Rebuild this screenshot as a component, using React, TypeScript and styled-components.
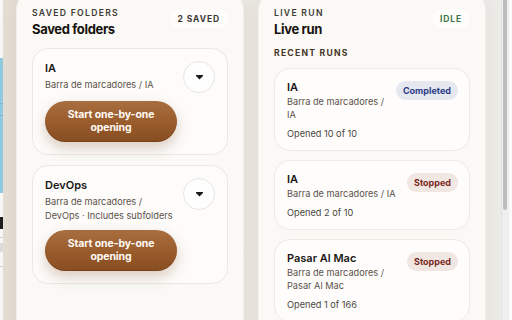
import styled, { createGlobalStyle } from 'styled-components';

const GlobalStyle = createGlobalStyle`
  html, body {
    margin: 0;
    padding: 0;
    background: #fafafa;
    font-family: Inter, "Noto Sans", sans-serif;
    overflow: hidden;
  }
  * { box-sizing: border-box; }
`;

type Folder = { name: string; path: string };
type Run = { name: string; path: string; opened: string; status: 'completed' | 'stopped' };

const folders: Folder[] = [
  { name: 'IA', path: 'Barra de marcadores / IA' },
  { name: 'DevOps', path: 'Barra de marcadores / DevOps · Includes subfolders' },
];

const runs: Run[] = [
  { name: 'IA', path: 'Barra de marcadores / IA', opened: 'Opened 10 of 10', status: 'completed' },
  { name: 'IA', path: 'Barra de marcadores / IA', opened: 'Opened 2 of 10', status: 'stopped' },
  { name: 'Pasar Al Mac', path: 'Barra de marcadores / Pasar Al Mac', opened: 'Opened 1 of 166', status: 'stopped' },
];

const App = () => {
  return (
    <>
      <GlobalStyle />
      <Screen>
        <PageEdge>
          <EdgeBlock $h={58} $bg="#f7f7f7" />
          <EdgeBlue>
            <EdgeLine />
            <EdgeLine />
          </EdgeBlue>
          <EdgeBlock $h={24} $bg="#f7f7f7" />
          <EdgeBlock $h={12} $bg="#1e1e1e" />
          <EdgeBlock $h={8} $bg="#f7f7f7" />
          <EdgeBlock $h={1} $bg="#cfcfcf" />
          <EdgeBlock $h={5} $bg="#f7f7f7" />
          <EdgeBlock $h={9} $bg="#dcdcdc" />
          <EdgeBlock $h={14} $bg="#f7f7f7" />
          <EdgeBlock $h={1} $bg="#cfcfcf" />
        </PageEdge>

        <Panel>
          <Column>
            <Header>
              <HeaderText>
                <Eyebrow>Saved folders</Eyebrow>
                <Title>Saved folders</Title>
              </HeaderText>
              <Pill>2 saved</Pill>
            </Header>
            <FolderList>
              {folders.map((f) => (
                <FolderCard key={f.name}>
                  <FolderTop>
                    <FolderText>
                      <ItemName>{f.name}</ItemName>
                      <FolderPath>{f.path}</FolderPath>
                    </FolderText>
                    <MenuButton aria-label="More">
                      <svg width="7" height="5" viewBox="0 0 7 5">
                        <rect x="0" y="0" width="7" height="1" fill="#1d1a17" />
                        <polygon points="0,1 7,1 3.5,4.6" fill="#1d1a17" />
                      </svg>
                    </MenuButton>
                  </FolderTop>
                  <StartButton>Start one-by-one opening</StartButton>
                </FolderCard>
              ))}
            </FolderList>
          </Column>

          <Column>
            <Header>
              <HeaderText>
                <Eyebrow>Live run</Eyebrow>
                <Title>Live run</Title>
              </HeaderText>
              <Pill $tone="green">Idle</Pill>
            </Header>
            <SectionLabel>Recent runs</SectionLabel>
            <RunList>
              {runs.map((r, i) => (
                <RunCard key={i}>
                  <RunText>
                    <ItemName>{r.name}</ItemName>
                    <RunPath>{r.path}</RunPath>
                    <RunMeta>{r.opened}</RunMeta>
                  </RunText>
                  <Status $status={r.status}>
                    {r.status === 'completed' ? 'Completed' : 'Stopped'}
                  </Status>
                </RunCard>
              ))}
            </RunList>
          </Column>
        </Panel>

        <ScrollTrack>
          <ScrollThumb />
        </ScrollTrack>
        <PageRest />
      </Screen>
    </>
  );
};

export default App;

const Screen = styled.div`
  display: flex;
  width: 512px;
  height: 320px;
  overflow: hidden;
`;

const PageEdge = styled.div`
  width: 3px;
  flex: none;
  display: flex;
  flex-direction: column;
  background: #f7f7f7;
`;

const EdgeBlock = styled.div<{ $h: number; $bg: string }>`
  height: ${(p) => p.$h}px;
  background: ${(p) => p.$bg};
  flex: none;
`;

const EdgeBlue = styled.div`
  height: 135px;
  flex: none;
  background: #93c9df;
  display: flex;
  flex-direction: column;
  gap: 11px;
  padding-top: 45px;
`;

const EdgeLine = styled.div`
  height: 1px;
  background: #7fb3ca;
`;

const Panel = styled.div`
  width: 498px;
  flex: none;
  display: grid;
  grid-template-columns: 228px 228px;
  column-gap: 14px;
  align-items: start;
  padding: 0 15px 0 13px;
  background: linear-gradient(90deg, #e4ddd3 0%, #eae6e0 45%, #ecebe7 100%);
`;

const Column = styled.section`
  margin-top: -10px;
  min-height: 360px;
  padding: 16px 15px 16px 15px;
  background: #faf9f6;
  border-radius: 20px;
  border: 1px solid rgba(120, 100, 80, 0.06);
  box-shadow: 0 4px 16px rgba(90, 70, 50, 0.07);
`;

const Header = styled.div`
  display: flex;
  justify-content: space-between;
  align-items: flex-start;
`;

const HeaderText = styled.div`
  display: flex;
  flex-direction: column;
`;

const Eyebrow = styled.div`
  font-size: 8.6px;
  line-height: 13px;
  font-weight: 600;
  letter-spacing: 1.3px;
  text-transform: uppercase;
  color: #3f3a35;
`;

const Title = styled.h2`
  margin: 0;
  font-size: 13px;
  line-height: 18px;
  font-weight: 700;
  letter-spacing: -0.35px;
  color: #16130f;
`;

const Pill = styled.div<{ $tone?: 'green' }>`
  margin-top: 2px;
  height: 19px;
  padding: 0 8px;
  display: flex;
  align-items: center;
  border-radius: 10px;
  background: #fefdfb;
  font-size: 8.5px;
  font-weight: 700;
  letter-spacing: 0.9px;
  text-transform: uppercase;
  color: ${(p) => (p.$tone === 'green' ? '#3c7649' : '#3a3632')};
`;

const SectionLabel = styled.div`
  margin: 9px 0 8px;
  font-size: 8.6px;
  line-height: 13px;
  font-weight: 700;
  letter-spacing: 1.25px;
  text-transform: uppercase;
  color: #463526;
`;

const FolderList = styled.div`
  display: flex;
  flex-direction: column;
  gap: 10px;
  margin-top: 10px;
`;

const RunList = styled.div`
  display: flex;
  flex-direction: column;
  gap: 9px;
`;

const FolderCard = styled.div`
  padding: 12px 12px 12px 12px;
  border: 1px solid #ece7e1;
  border-radius: 16px;
  background: #fdfcfb;
`;

const FolderTop = styled.div`
  display: flex;
  justify-content: space-between;
  align-items: flex-start;
  gap: 6px;
`;

const FolderText = styled.div`
  display: flex;
  flex-direction: column;
  min-width: 0;
`;

const ItemName = styled.div`
  font-size: 11px;
  line-height: 15px;
  font-weight: 600;
  color: #1a1714;
`;

const FolderPath = styled.div`
  margin-top: 2px;
  font-size: 9.2px;
  line-height: 13.5px;
  color: #5a524a;
`;

const MenuButton = styled.button`
  flex: none;
  width: 32px;
  height: 32px;
  border-radius: 50%;
  border: 1px solid #e9e5e0;
  background: #fefefe;
  display: flex;
  align-items: center;
  justify-content: center;
  padding: 0;
  svg { display: block; }
`;

const StartButton = styled.button`
  margin-top: 8px;
  width: 132px;
  height: 41px;
  padding: 0 20px;
  border: none;
  border-radius: 21px;
  background: linear-gradient(180deg, #a96e3f 0%, #96592a 60%, #874d21 100%);
  box-shadow: 0 6px 14px rgba(130, 80, 40, 0.28), inset 0 -1px 0 rgba(90, 50, 20, 0.35);
  color: #fffaf4;
  font-family: Inter, "Noto Sans", sans-serif;
  font-size: 10.5px;
  line-height: 12.5px;
  font-weight: 700;
  letter-spacing: -0.1px;
  text-align: center;
`;

const RunCard = styled.div`
  display: grid;
  grid-template-columns: 1fr auto;
  column-gap: 6px;
  align-items: start;
  padding: 11px 11px 10px 12px;
  border: 1px solid #eee9e3;
  border-radius: 16px;
  background: #fefdfc;
`;

const RunText = styled.div`
  display: flex;
  flex-direction: column;
  min-width: 0;
`;

const RunPath = styled.div`
  font-size: 9.2px;
  line-height: 13px;
  color: #5a524a;
`;

const RunMeta = styled.div`
  margin-top: 6px;
  font-size: 9.2px;
  line-height: 13px;
  color: #4c4742;
`;

const Status = styled.div<{ $status: 'completed' | 'stopped' }>`
  margin-top: 1px;
  height: 19px;
  padding: 0 7px;
  display: flex;
  align-items: center;
  border-radius: 10px;
  font-size: 9px;
  font-weight: 700;
  background: ${(p) => (p.$status === 'completed' ? '#e6e8f0' : '#f0e6e2')};
  color: ${(p) => (p.$status === 'completed' ? '#2c3c88' : '#7a2a1e')};
`;

const ScrollTrack = styled.div`
  width: 7px;
  flex: none;
  padding: 0 1px 0 1px;
  background: #efefef;
  border-left: 1px solid #e2e2e2;
`;

const ScrollThumb = styled.div`
  height: 210px;
  border-radius: 0 0 3px 3px;
  background: #bdbdbd;
`;

const PageRest = styled.div`
  flex: 1;
  background: #fbfbfb;
  border-left: 1px solid #ececec;
`;
